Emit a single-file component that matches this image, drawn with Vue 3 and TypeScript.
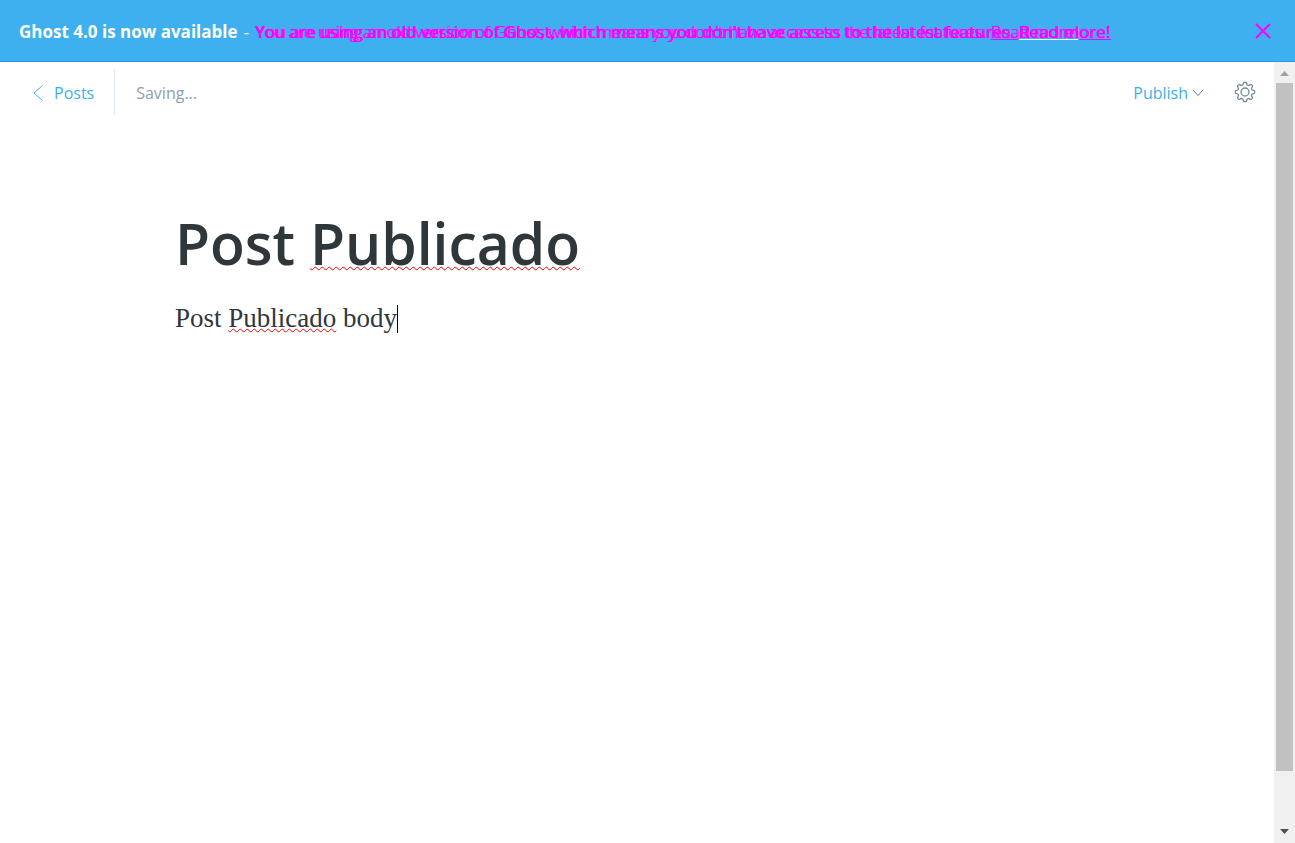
<script setup lang="ts">
const notice: string = "You are using an old version of Ghost, which means you don't have access to the latest features. "
const gearPoints: string = Array.from({ length: 96 }, (_, i) => {
  const angle = (i / 96) * Math.PI * 2
  const wave = Math.tanh(2.2 * Math.cos(8 * angle)) / Math.tanh(2.2)
  const radius = 8.5 + 1.2 * wave
  return `${(11 + radius * Math.sin(angle)).toFixed(2)},${(11 - radius * Math.cos(angle)).toFixed(2)}`
}).join(' ')
</script>

<template>
  <div class="app">
    <aside class="banner">
      <p class="message">
        <strong>Ghost 4.0 is now available</strong>
        <span class="dash">-</span>
        <span class="notices">
          <span class="notice light">{{ notice }}<a href="#"><span>Read more!</span></a></span>
          <span class="notice">{{ notice }}<a href="#"><span class="shared">Read m</span><span>ore!</span></a></span>
        </span>
      </p>
      <button class="close" type="button" aria-label="Close">
        <svg width="16" height="16" viewBox="0 0 16 16"><path d="M1 1L15 15M15 1L1 15" /></svg>
      </button>
    </aside>
    <div class="workspace">
      <main class="editor">
        <header class="toolbar">
          <a class="back" href="#">
            <svg width="10" height="16" viewBox="0 0 10 16"><path d="M9.500.500L1 8L9.500 15.500" /></svg>
            Posts
          </a>
          <span class="status">Saving...</span>
          <button class="publish" type="button">
            Publish
            <svg width="12" height="8" viewBox="0 0 12 8"><path d="M1 1L6 6.500L11 1" /></svg>
          </button>
          <button class="settings" type="button" aria-label="Settings">
            <svg width="22" height="22" viewBox="0 0 22 22">
              <polygon :points="gearPoints" />
              <circle cx="11" cy="11" r="4" />
            </svg>
          </button>
        </header>
        <article class="post">
          <h1>Post <span class="misspelt">Publicado</span></h1>
          <p class="body">Post <span class="misspelt">Publicado</span> body<span class="caret"></span></p>
        </article>
      </main>
      <div class="scrollbar" aria-hidden="true">
        <svg class="arrow up" width="9" height="5" viewBox="0 0 9 5"><path d="M0 5L4.500 0L9 5Z" /></svg>
        <div class="track"><div class="thumb"></div></div>
        <svg class="arrow" width="9" height="5" viewBox="0 0 9 5"><path d="M0 0L4.500 5L9 0Z" /></svg>
      </div>
    </div>
  </div>
</template>

<style>
body { margin: 0; }
</style>

<style scoped>
.app {
  min-height: 100vh;
  display: flex;
  flex-direction: column;
  background: #fff;
  font-family: "Open Sans", "Noto Sans", sans-serif;
  font-size: 16px;
}
.banner {
  box-sizing: border-box;
  height: 62px;
  padding: 0 24px 0 19px;
  display: flex;
  align-items: center;
  justify-content: space-between;
  background: #3eb0ef;
  border-bottom: 1px solid #1f98dc;
  color: #fff;
}
.message {
  margin: 0;
  padding-top: 2px;
  display: flex;
  gap: 6px;
  line-height: 24px;
  font-size: 17px;
  white-space: nowrap;
}
.notices { display: grid; color: #f0f; text-shadow: 1px 0 0 #f0f; }
.notice { grid-area: 1 / 1; }
.light { font-weight: 300; }
.notice a { color: inherit; text-decoration: none; }
.notice a span { text-decoration: underline #f0f; }
.notice a .shared { text-decoration-color: #fff; }
button { padding: 0; border: 0; background: none; font: inherit; cursor: pointer; }
svg { display: block; fill: none; }
.close svg { stroke: #f0f; stroke-width: 2; }
.workspace { flex: 1; display: flex; }
.editor { flex: 1; min-width: 0; }
.toolbar {
  display: flex;
  align-items: center;
  height: 46px;
  padding: 7px 18px 0 33px;
  color: #8ca0ab;
  line-height: 24px;
}
.back {
  display: flex;
  align-items: center;
  gap: 11px;
  height: 46px;
  padding-right: 20px;
  border-right: 1px solid #dfe9f0;
  color: #3eb0ef;
  text-decoration: none;
}
.back svg { stroke: #3eb0ef; stroke-width: 1; }
.status { margin-left: 21px; }
.publish {
  display: flex;
  align-items: center;
  gap: 4px;
  margin-left: auto;
  margin-right: 30px;
  color: #3eb0ef;
}
.publish svg { stroke: #647f8d; stroke-width: 1; }
.back, .status, .publish { padding-top: 1px; }
.back { box-sizing: border-box; }
.settings svg { stroke: #738a94; stroke-width: 1.3; }
.post { padding: 85px 175px 0; color: #2f373b; }
h1 { margin: 0; font-size: 57px; font-weight: 600; line-height: 86px; }
.body {
  margin: 12px 0 0;
  font-family: Georgia, "Liberation Serif", serif;
  font-size: 27px;
  line-height: 40px;
}
.misspelt {
  text-decoration: underline wavy #f00 1px;
  text-decoration-skip-ink: none;
}
.caret { display: inline-block; width: 1px; height: 28px; background: #000; vertical-align: -6px; }
.scrollbar {
  display: flex;
  flex-direction: column;
  align-items: center;
  box-sizing: border-box;
  width: 21px;
  padding: 9px 0;
  background: #f0f0f0;
}
.arrow { fill: #505050; }
.arrow.up { fill: #a0a0a0; }
.track { display: grid; grid-template-rows: 685fr 52fr; flex: 1; width: 17px; padding: 7px 0 6px; }
.thumb { background: #c1c1c1; }
</style>
